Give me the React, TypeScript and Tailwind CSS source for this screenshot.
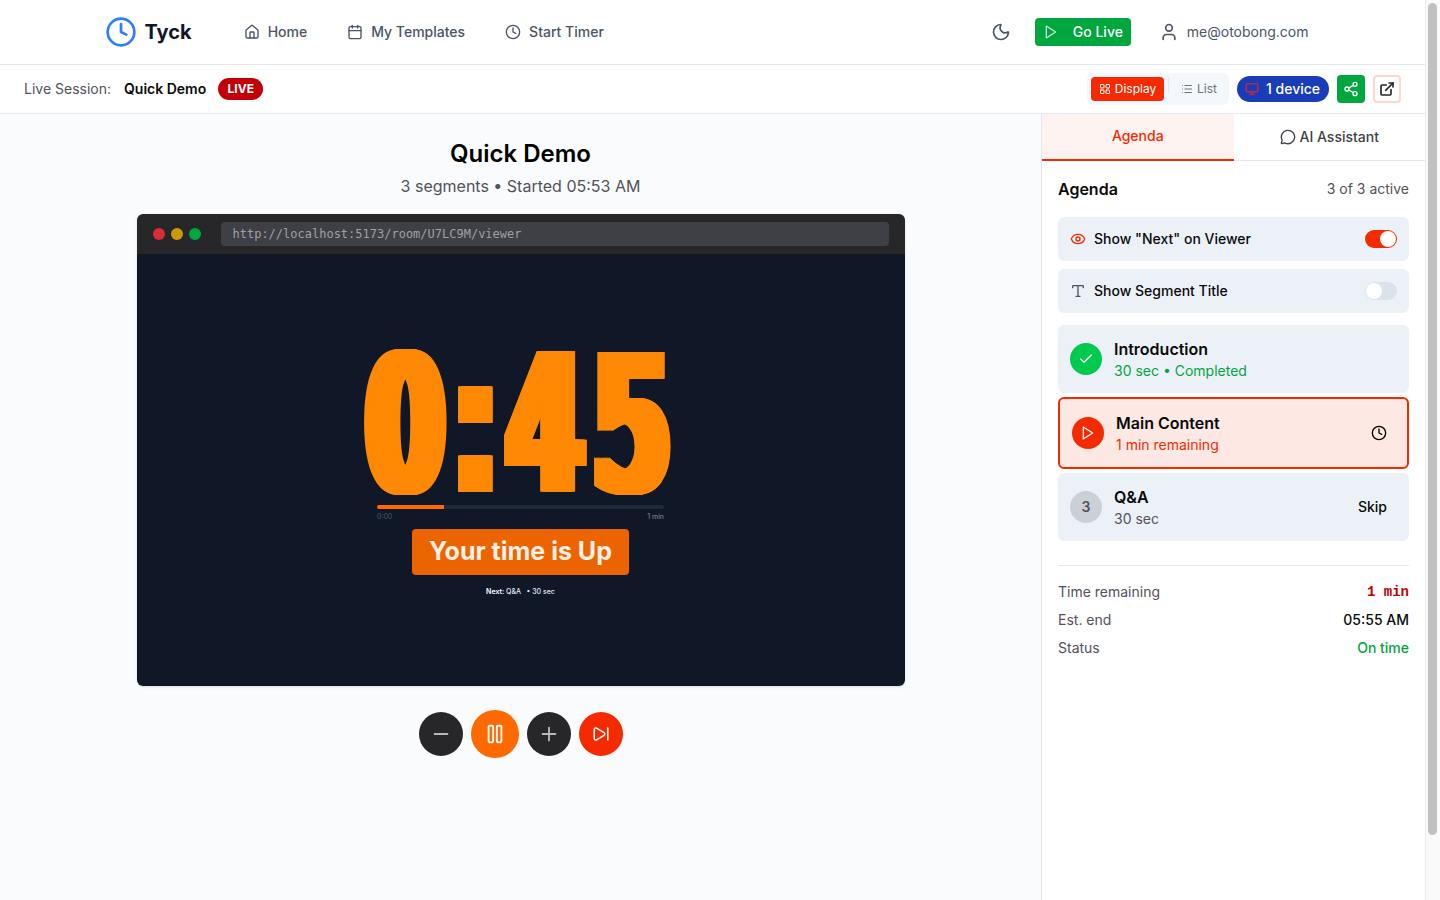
import {
  Calendar,
  Check,
  Clock,
  ExternalLink,
  Eye,
  House,
  LayoutGrid,
  List,
  MessageCircle,
  Minus,
  Monitor,
  Moon,
  Pause,
  Plus,
  Share2,
  SkipForward,
  Type,
  User,
} from "lucide-react";

function PlayIcon({ size, className }: { size: number; className?: string }) {
  return (
    <svg
      width={size}
      height={size}
      viewBox="0 0 24 24"
      fill="none"
      stroke="currentColor"
      strokeWidth="2"
      strokeLinecap="round"
      strokeLinejoin="round"
      className={className}
    >
      <polygon points="5 3 19 12 5 21 5 3" />
    </svg>
  );
}

function NavItem({ icon: Icon, label }: { icon: typeof House; label: string }) {
  return (
    <a className="flex items-center gap-2 px-3 h-9 text-sm font-medium text-[#4a5565]">
      <Icon size={16} />
      <span>{label}</span>
    </a>
  );
}

function Toggle({ on }: { on: boolean }) {
  return (
    <div
      className={`w-8 h-[18px] rounded-full flex items-center px-[1px] ${
        on ? "bg-[#f52a00] justify-end" : "bg-[#dbe2ea] justify-start"
      }`}
    >
      <div className="w-4 h-4 rounded-full bg-white" />
    </div>
  );
}

function Stat({ label, children }: { label: string; children: React.ReactNode }) {
  return (
    <div className="flex items-center justify-between h-5 text-sm">
      <span className="text-[#52525c]">{label}</span>
      {children}
    </div>
  );
}

export default function App() {
  return (
    <div className="h-screen flex overflow-hidden">
      <div className="flex-1 min-w-0 flex flex-col bg-white font-['Inter',sans-serif] text-[#0a0a0a]">
        <header className="h-[65px] border-b border-[#e2e8f0] bg-white">
          <div className="max-w-7xl mx-auto px-8 h-full flex items-center">
            <div className="flex items-center gap-2 text-[#101828]">
              <Clock size={32} className="text-[#2b7fff]" />
              <span className="text-xl font-bold">Tyck</span>
            </div>
            <nav className="flex items-center gap-4 ml-10">
              <NavItem icon={House} label="Home" />
              <NavItem icon={Calendar} label="My Templates" />
              <NavItem icon={Clock} label="Start Timer" />
            </nav>
            <div className="ml-auto flex items-center">
              <Moon size={20} className="text-[#4a5565]" />
              <button className="ml-6 h-7 w-24 rounded bg-[#00a63e] text-white text-sm font-medium flex items-center pl-2 gap-[14px]">
                <PlayIcon size={16} className="opacity-80" />
                <span>Go Live</span>
              </button>
              <div className="ml-4 px-3 flex items-center gap-2 text-sm text-[#4a5565]">
                <User size={20} />
                <span>me@otobong.com</span>
              </div>
            </div>
          </div>
        </header>

        <div className="h-[49px] border-b border-[#e2e8f0] bg-white px-6 flex items-center justify-between">
          <div className="flex items-center text-sm">
            <span className="text-[#52525c]">Live Session:</span>
            <span className="ml-[13px] font-semibold">Quick Demo</span>
            <span className="ml-3 h-[22px] w-[45px] rounded-full bg-[#c10007] text-white text-xs font-bold flex items-center justify-center">
              LIVE
            </span>
          </div>
          <div className="flex items-center gap-2">
            <div className="h-8 w-[142px] rounded-md bg-[#f4f7fb] flex items-center pl-1">
              <button className="h-6 w-[73px] rounded bg-[#f52a00] text-white text-xs flex items-center justify-center gap-1">
                <LayoutGrid size={12} />
                Display
              </button>
              <div className="w-px h-4 bg-[#e2e8f0] ml-1 -mt-2" />
              <button className="ml-3 text-xs text-[#71717b] flex items-center gap-1">
                <List size={12} />
                List
              </button>
            </div>
            <div className="h-[26px] w-[92px] rounded-full bg-[#193cb8] text-white text-sm font-medium flex items-center pl-2 gap-[7px]">
              <Monitor size={14} className="text-[#f0201a]" />
              1 device
            </div>
            <button className="w-7 h-7 rounded bg-[#00a63e] text-white flex items-center justify-center">
              <Share2 size={16} />
            </button>
            <button className="w-7 h-7 rounded border-2 border-[#ffd6d0] bg-white text-[#27272a] flex items-center justify-center">
              <ExternalLink size={16} strokeWidth={2.5} />
            </button>
          </div>
        </div>

        <div className="flex-1 flex min-h-0">
          <main className="flex-1 bg-[#fafbfd] flex flex-col items-center pt-6">
            <h1 className="text-2xl font-semibold leading-8 text-black">Quick Demo</h1>
            <p className="mt-1 text-base leading-6 text-[#52525c]">3 segments • Started 05:53 AM</p>

            <div className="mt-4 w-3xl rounded-md overflow-hidden shadow-sm">
              <div className="h-10 bg-[#27272a] flex items-center pl-4 pr-4">
                <div className="flex items-center gap-[6px]">
                  <span className="w-3 h-3 rounded-full bg-[#d92d3a]" />
                  <span className="w-3 h-3 rounded-full bg-[#ca9a0a]" />
                  <span className="w-3 h-3 rounded-full bg-[#00a63e]" />
                </div>
                <div className="ml-5 flex-1 h-6 rounded bg-[#3f3f46] px-3 flex items-center font-['DejaVu_Sans_Mono',monospace] text-xs text-[#9f9fa9]">
                  http://localhost:5173/room/U7LC9M/viewer
                </div>
              </div>
              <div className="h-[432px] bg-[#101828] flex flex-col items-center pt-[92px]">
                {/* no heavy condensed font here, so a wide bold is squeezed and smeared sideways */}
                <div className="h-[159px] flex items-center justify-center">
                  <span className="ml-[5px] font-['DejaVu_Sans',sans-serif] font-bold text-[193px] leading-none tracking-[15px] text-[#ff8904] scale-x-[0.58] [text-shadow:2px_0_#ff8904,-2px_0_#ff8904,4px_0_#ff8904,-4px_0_#ff8904,6px_0_#ff8904,-6px_0_#ff8904,8px_0_#ff8904,-8px_0_#ff8904,10px_0_#ff8904,-10px_0_#ff8904,12px_0_#ff8904,-12px_0_#ff8904,13px_0_#ff8904,-13px_0_#ff8904]">
                    0:45
                  </span>
                </div>
                <div className="w-[287px]">
                  <div className="h-1 rounded-full bg-[#1e293b] overflow-hidden">
                    <div className="h-full w-[23.5%] bg-[#ff6900]" />
                  </div>
                  <div className="mt-[3px] flex justify-between text-[7px] leading-[9px]">
                    <span className="text-[#45556c]">0:00</span>
                    <span className="text-[#8a8f98]">1 min</span>
                  </div>
                </div>
                <div className="mt-[8px] w-[217px] h-[46px] rounded-sm bg-[#eb6400] flex items-center justify-center text-[25px] font-bold text-white/90">
                  Your time is Up
                </div>
                <div className="mt-3 text-[7px] leading-[10px] text-[#e2e8f0] font-medium">
                  <span className="text-white font-semibold">Next:</span> Q&amp;A &nbsp; • 30 sec
                </div>
              </div>
            </div>

            <div className="mt-6 flex items-center gap-2">
              <button className="w-11 h-11 rounded-full bg-[#27272a] text-[#b8b8bd] flex items-center justify-center">
                <Minus size={22} />
              </button>
              <button className="w-12 h-12 rounded-full bg-[#ff6900] text-white flex items-center justify-center">
                <Pause size={22} />
              </button>
              <button className="w-11 h-11 rounded-full bg-[#27272a] text-[#b8b8bd] flex items-center justify-center">
                <Plus size={22} />
              </button>
              <button className="w-11 h-11 rounded-full bg-[#f52a00] text-white flex items-center justify-center">
                <SkipForward size={18} />
              </button>
            </div>
          </main>

          <aside className="w-96 border-l border-[#e2e8f0] bg-white">
            <div className="h-[47px] flex border-b border-[#e2e8f0]">
              <div className="w-1/2 h-[47px] bg-[#fef3f0] border-b-2 border-[#f52a00] text-[#f52a00] text-sm font-medium flex items-center justify-center pb-px">
                Agenda
              </div>
              <div className="w-1/2 text-sm font-medium text-[#3f3f46] flex items-center justify-center gap-1">
                <MessageCircle size={16} />
                AI Assistant
              </div>
            </div>

            <div className="p-4">
              <div className="flex items-center justify-between h-6">
                <h2 className="text-base font-semibold">Agenda</h2>
                <span className="text-sm text-[#52525c]">3 of 3 active</span>
              </div>

              <div className="mt-4 flex flex-col gap-2">
                <div className="h-11 rounded-md bg-[#ecf1f8] px-3 flex items-center gap-2 text-sm font-medium">
                  <Eye size={16} className="text-[#f52a00]" />
                  <span className="flex-1">Show "Next" on Viewer</span>
                  <Toggle on />
                </div>
                <div className="h-11 rounded-md bg-[#ecf1f8] px-3 flex items-center gap-2 text-sm font-medium">
                  <Type size={16} className="text-[#52525c]" />
                  <span className="flex-1">Show Segment Title</span>
                  <Toggle on={false} />
                </div>
              </div>

              <div className="mt-3 flex flex-col gap-1">
                <div className="rounded-md bg-[#ecf1f8] p-3 flex items-center gap-3">
                  <div className="w-8 h-8 rounded-full bg-[#00c950] text-white flex items-center justify-center">
                    <Check size={16} />
                  </div>
                  <div>
                    <div className="text-base leading-6 font-semibold">Introduction</div>
                    <div className="text-sm leading-5 text-[#00a63e]">30 sec • Completed</div>
                  </div>
                </div>
                <div className="rounded-md border-2 border-[#f52a00] bg-[#fde8e3] p-3 flex items-center gap-3">
                  <div className="w-8 h-8 rounded-full bg-[#f52a00] text-white flex items-center justify-center">
                    <PlayIcon size={16} />
                  </div>
                  <div className="flex-1">
                    <div className="text-base leading-6 font-semibold">Main Content</div>
                    <div className="text-sm leading-5 text-[#f52a00]">1 min remaining</div>
                  </div>
                  <Clock size={16} className="mr-2 text-black" />
                </div>
                <div className="rounded-md bg-[#ecf1f8] p-3 flex items-center gap-3">
                  <div className="w-8 h-8 rounded-full bg-[#cbd0d6] text-[#52525c] text-sm font-semibold flex items-center justify-center">
                    3
                  </div>
                  <div className="flex-1">
                    <div className="text-base leading-6 font-semibold">Q&amp;A</div>
                    <div className="text-sm leading-5 text-[#52525c]">30 sec</div>
                  </div>
                  <button className="mr-[10px] text-sm font-medium">Skip</button>
                </div>
              </div>

              <div className="mt-6 pt-4 border-t border-[#e2e8f0] flex flex-col gap-2">
                <Stat label="Time remaining">
                  <span className="font-['Liberation_Mono',monospace] font-bold text-[#c10007]">1 min</span>
                </Stat>
                <Stat label="Est. end">
                  <span className="font-medium">05:55 AM</span>
                </Stat>
                <Stat label="Status">
                  <span className="font-medium text-[#00a63e]">On time</span>
                </Stat>
              </div>
            </div>
          </aside>
        </div>
      </div>

      {/* page scrollbar as in the reference, headless hides the real one */}
      <div className="w-[15px] shrink-0 bg-[#fafafa] border-l border-[#ececec] pt-[3px] pl-[2px] pr-[3px]">
        <div className="h-[832px] rounded-full bg-[#c1c1c1]" />
      </div>
    </div>
  );
}
